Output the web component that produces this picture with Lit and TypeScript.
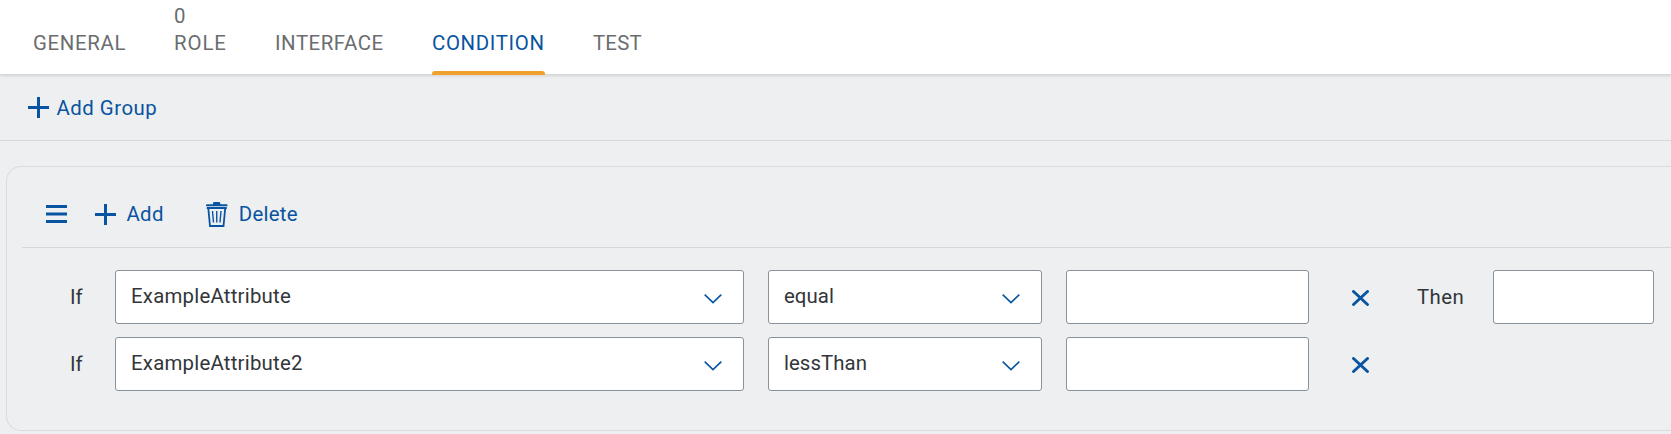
import { LitElement, html, css, svg } from "lit";
import { customElement, property } from "lit/decorators.js";
import { classMap } from "lit/directives/class-map.js";

const glyphs = {
  add: svg`<path d="M0 10.5H21M10.500 0V21" stroke="currentColor" stroke-width="3" fill="none"/>`,
  menu: svg`<path d="M0 1.500H21M0 9H21M0 16.500H21" stroke="currentColor" stroke-width="3" fill="none"/>`,
  trash: svg`<path d="M7 2.200V1.300Q7 0 8.300 0H13Q14.300 0 14.300 1.300V2.200H20.500Q21.500 2.200 21.500 3.200V4.200H0V3.200Q0 2.200 1 2.200Z" fill="currentColor"/><path d="M0.800 6H20.800M2.300 6L4 24H17.500L19.200 6" fill="none" stroke="currentColor" stroke-width="1.800"/><path d="M6.500 9L7.500 20.500M10.750 9V20.500M15 9L14 20.500" fill="none" stroke="currentColor" stroke-width="1.400"/>`,
  chevron: svg`<path d="M0.700 0.700L9 8.700L17.300 0.700" fill="none" stroke="currentColor" stroke-width="1.600"/>`,
  close: svg`<path d="M1.500 1.500L15.500 14.500M15.500 1.500L1.500 14.500" fill="none" stroke="currentColor" stroke-width="2.900" stroke-linecap="round"/>`,
};
const sizes = { add: [21, 21], menu: [21, 18], trash: [22, 25], chevron: [18, 10], close: [17, 16] };

const icon = (name: keyof typeof glyphs) => {
  const [w, h] = sizes[name];
  return html`<svg class="icon" width=${w} height=${h} viewBox="0 0 ${w} ${h}">${glyphs[name]}</svg>`;
};

@customElement("tab-bar")
export class TabBar extends LitElement {
  static styles = css`
    :host { display: block; position: relative; background: #fff; height: 74px; box-shadow: 0 1px 0 #d4d6d8, 0 2px 3px rgba(0, 0, 0, 0.12); color: #6a6d70; }
    .tabs { display: flex; height: 75px; padding-left: 33px; gap: 48px; }
    .tab { display: flex; flex-direction: column; justify-content: flex-end; box-sizing: border-box; height: 75px; padding-bottom: 14px; line-height: 27px; border-bottom: 4px solid transparent; white-space: nowrap; }
    .general { width: 93px; letter-spacing: 0.65px; }
    .role { width: 53px; letter-spacing: 0.9px; }
    .interface { width: 109px; letter-spacing: 0.55px; }
    .condition { width: 113px; letter-spacing: 0.65px; }
    .test { width: 50px; letter-spacing: 0.2px; }
    .selected { color: #0854a0; padding-bottom: 0; border: 0; }
    .selected::after { content: ""; margin-top: 14px; height: 4px; background: #f0a02c; border-radius: 3px 3px 0 0; }
  `;
  tabs = [
    { id: "general", text: "GENERAL" },
    { id: "role", text: "ROLE", count: "0" },
    { id: "interface", text: "INTERFACE" },
    { id: "condition", text: "CONDITION", selected: true },
    { id: "test", text: "TEST" },
  ];
  render() {
    return html`<nav class="tabs">${this.tabs.map(
      (t) => html`<div class=${classMap({ tab: true, [t.id]: true, selected: !!t.selected })}>
        ${t.count ? html`<span>${t.count}</span>` : ""}<span>${t.text}</span>
      </div>`
    )}</nav>`;
  }
}

@customElement("condition-row")
export class ConditionRow extends LitElement {
  @property() attribute = "";
  @property() operator = "";
  @property({ type: Boolean }) result = false;
  static styles = css`
    :host { display: flex; align-items: center; height: 54px; }
    .icon { display: block; flex: none; color: #0854a0; }
    .label { padding-top: 1px; white-space: nowrap; }
    .if { width: 45px; }
    .then { width: 76px; letter-spacing: 0.45px; }
    .field { display: flex; align-items: center; justify-content: space-between; box-sizing: border-box; flex: none; height: 54px; border: 1px solid #89919a; border-radius: 3px; background: #fff; padding: 0 21px 1px 15px; }
    .field .icon { margin-top: 5px; }
    .attribute { width: 629px; margin-right: 24px; letter-spacing: 0.22px; }
    .operator { width: 274px; margin-right: 24px; letter-spacing: 0.05px; }
    .value { width: 243px; margin-right: 43px; }
    .target { width: 161px; }
    .close { margin-right: 48px; padding-top: 1px; }
  `;
  render() {
    return html`
      <span class="label if">If</span>
      <div class="field attribute"><span>${this.attribute}</span>${icon("chevron")}</div>
      <div class="field operator"><span>${this.operator}</span>${icon("chevron")}</div>
      <div class="field value"></div>
      <div class="close">${icon("close")}</div>
      ${this.result ? html`<span class="label then">Then</span><div class="field target"></div>` : ""}
    `;
  }
}

@customElement("app-root")
export class AppRoot extends LitElement {
  static styles = css`
    :host { display: block; height: 434px; overflow: hidden; background: #edeff0; color: #32363a; font: 20.400px/27px Roboto, "Liberation Sans", sans-serif; }
    .icon { display: block; flex: none; }
    .toolbar { display: flex; align-items: center; box-sizing: border-box; border-bottom: 1px solid #d5d8da; color: #0854a0; }
    .toolbar span { padding-top: 1px; }
    .main { height: 67px; padding: 1px 0 0 28px; gap: 7.5px; letter-spacing: 0.5px; }
    .card { box-sizing: border-box; height: 265px; margin: 25px 0 0 6px; padding-left: 15px; border: 1px solid #d9dcde; border-right: 0; border-radius: 15px 0 0 15px; }
    .actions { height: 81px; padding: 14px 0 0 24px; letter-spacing: 0.3px; }
    .button { display: flex; align-items: center; gap: 10.5px; }
    .add { margin-left: 28px; }
    .delete { margin-left: 42.5px; }
    .rows { display: flex; flex-direction: column; gap: 13px; padding: 22px 0 0 48px; }
  `;
  render() {
    return html`
      <tab-bar></tab-bar>
      <div class="toolbar main">${icon("add")}<span>Add Group</span></div>
      <section class="card">
        <div class="toolbar actions">
          ${icon("menu")}
          <div class="button add">${icon("add")}<span>Add</span></div>
          <div class="button delete">${icon("trash")}<span>Delete</span></div>
        </div>
        <div class="rows">
          <condition-row attribute="ExampleAttribute" operator="equal" result></condition-row>
          <condition-row attribute="ExampleAttribute2" operator="lessThan"></condition-row>
        </div>
      </section>
    `;
  }
}
